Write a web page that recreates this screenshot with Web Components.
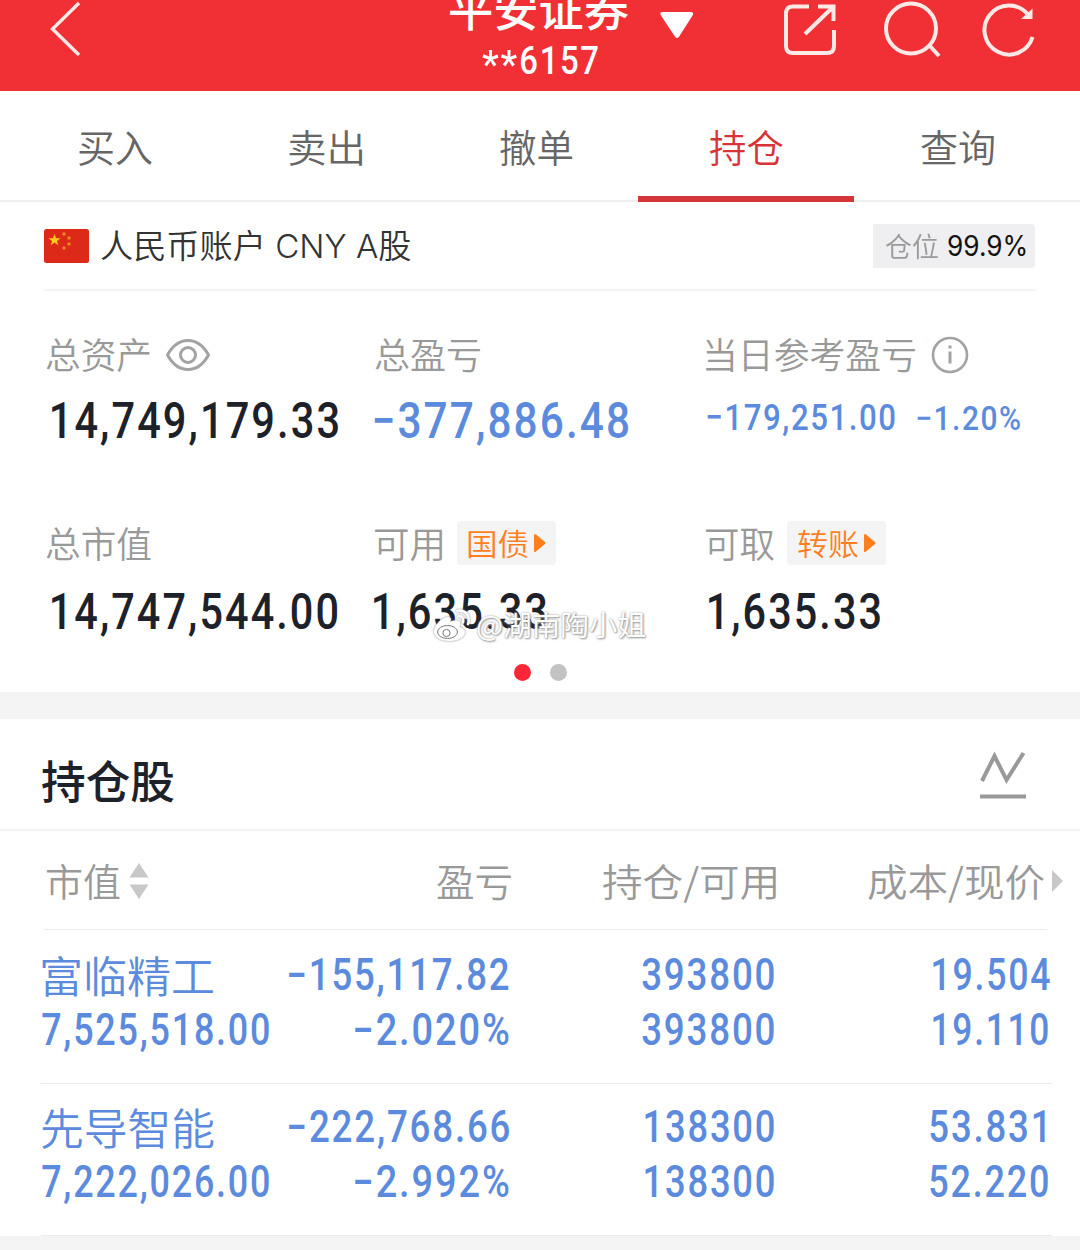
<!DOCTYPE html>
<html lang="zh-CN">
<head>
<meta charset="utf-8">
<title>持仓</title>
<style>
    body {
        margin: 0;
        background: #f4f4f4;
        font-family: "Noto Sans CJK SC", sans-serif;
    }
</style>
</head>
<body>
<trade-app></trade-app>

<script>
const ZH = `"Noto Sans CJK SC", sans-serif`;
const pen = document.createElement("canvas").getContext("2d");

// One line of text squeezed or stretched to an exact ink width.
class FitText extends HTMLElement {
    constructor() {
        super();
        this.attachShadow({ mode: "open" });
        this.shadowRoot.innerHTML = /* html */ `
            <style>
                :host {
                    display: block;
                    flex: none;
                    line-height: 50px;
                    height: 50px;
                }

                span {
                    display: block;
                    width: max-content;
                    white-space: pre;
                    transform-origin: 0 50%;
                }
            </style>
            <span><slot></slot></span>
        `;
    }

    connectedCallback() {
        const width = Number(this.getAttribute("w"));
        const css = getComputedStyle(this);
        pen.font = `${css.fontWeight} ${css.fontSize} ${css.fontFamily}`;
        pen.letterSpacing = css.letterSpacing === "normal" ? "0px" : css.letterSpacing;
        const m = pen.measureText(this.textContent);
        const scale = width / (m.actualBoundingBoxLeft + m.actualBoundingBoxRight);
        this.style.width = width + "px";
        this.shadowRoot.querySelector("span").style.transform =
            `translateX(${m.actualBoundingBoxLeft * scale}px) scaleX(${scale})`;
    }
}

class AppHeader extends HTMLElement {
    constructor() {
        super();
        this.attachShadow({ mode: "open" });
        this.shadowRoot.innerHTML = /* html */ `
            <style>
                :host {
                    display: grid;
                    grid-template-columns: 450px 180px 1fr;
                    height: 91px;
                    overflow: hidden;
                    background: #f03035;
                    color: #fff;
                }

                svg { display: block; }
                .back { margin: 0 0 0 48px; }
                .title { font: 500 45px ${ZH}; line-height: 50px; margin-top: -17px; }
                .code {
                    display: flex;
                    gap: 4px;
                    margin: 3px 0 0 32px;
                    font: 500 39px Roboto, sans-serif;
                    letter-spacing: 0.05em;
                }
                .code fit-text { line-height: 50px; }
                .stars { margin-top: 4px; }
            </style>
            <svg class="back" width="36" height="60" fill="none" stroke="#ffe9e6" stroke-width="3.4">
                <path d="M31 3 4.500 29 31 55"/>
            </svg>
            <div>
                <fit-text class="title" w="179">平安证券</fit-text>
                <div class="code">
                    <fit-text class="stars" w="35">**</fit-text>
                    <fit-text w="77">6157</fit-text>
                </div>
            </div>
            <svg width="450" height="91" fill="none" stroke="#ffe9e6" stroke-width="4">
                <path fill="#fff" stroke="none" d="M32.500 12h28q4 0 2 3.500L49.500 36q-2.500 4-5 0L31 15.500Q29 12 32.500 12z"/>
                <path d="M179 6.500H163q-7 0-7 7V46q0 7 7 7h34q7 0 7-7V30"/>
                <path d="M188 6.500h15.500V21M203 7 175 34"/>
                <circle cx="281" cy="28.500" r="25"/>
                <path d="m299 45 10 11"/>
                <path d="M402.500 37A24.500 24.500 0 1 1 397.500 14"/>
                <path fill="#ffe9e6" stroke="none" d="M402.500 8.500V19H391z"/>
            </svg>
        `;
    }
}

class TabItem extends HTMLElement {
    constructor() {
        super();
        this.attachShadow({ mode: "open" });
        this.shadowRoot.innerHTML = /* html */ `
            <style>
                :host {
                    display: flex;
                    flex-direction: column;
                    align-items: center;
                    justify-content: space-between;
                    color: #666;
                    font: 350 38px ${ZH};
                }

                :host([active]) { color: #d83437; }
                fit-text { margin-top: 30px; }
                i { width: 216px; height: 6px; margin-left: -2px; }
                :host([active]) i { background: #d53639; }
            </style>
            <fit-text w="73">${this.textContent}</fit-text>
            <i></i>
        `;
    }
}

class TabBar extends HTMLElement {
    constructor() {
        super();
        this.attachShadow({ mode: "open" });
        this.shadowRoot.innerHTML = /* html */ `
            <style>
                :host {
                    display: grid;
                    grid-template-columns: repeat(5, 210.5px);
                    height: 111px;
                    padding-left: 10px;
                    background: linear-gradient(#eee, #eee) 0 109px / 100% 2px no-repeat #fff;
                }
            </style>
            <slot></slot>
        `;
    }
}

class AccountBar extends HTMLElement {
    constructor() {
        super();
        this.attachShadow({ mode: "open" });
        this.shadowRoot.innerHTML = /* html */ `
            <style>
                :host {
                    display: flex;
                    align-items: center;
                    height: 87px;
                    margin: 0 44px;
                    border-bottom: 2px solid #f5f5f5;
                }

                .name {
                    margin: 2px auto 0 12px;
                    color: #333;
                    font: 350 32.500px Inter, ${ZH};
                    line-height: 50px;
                }

                .badge {
                    display: flex;
                    align-items: center;
                    gap: 10px;
                    box-sizing: border-box;
                    width: 162px;
                    height: 44px;
                    padding-left: 12px;
                    border-radius: 0 4px 4px 0;
                    background: #efeff1;
                    color: #999;
                    font: 350 27px ${ZH};
                    margin-right: 1px;
                }

                .pct { color: #111; font: 400 28px Inter, sans-serif; line-height: 50px; }
            </style>
            <svg width="45" height="34" viewBox="0 0 45 34">
                <rect width="45" height="34" rx="2.500" fill="#dd2a18"/>
                <path fill="#ffcc1a" d="m10.500 5 1.500 4.200h4.500l-3.600 2.700 1.400 4.300-3.800-2.600-3.700 2.600 1.300-4.300-3.600-2.700H9z"/>
                <g fill="#f08a1c">
                    <circle cx="20" cy="5" r="1.700"/><circle cx="25" cy="9" r="1.700"/>
                    <circle cx="25" cy="15" r="1.700"/><circle cx="20" cy="19" r="1.700"/>
                </g>
            </svg>
            <fit-text class="name" w="310">人民币账户 CNY A股</fit-text>
            <div class="badge">
                <fit-text w="53">仓位</fit-text>
                <fit-text class="pct" w="78">99.9%</fit-text>
            </div>
        `;
    }
}

// Small orange link button next to a label.
class LinkChip extends HTMLElement {
    constructor() {
        super();
        this.attachShadow({ mode: "open" });
        this.shadowRoot.innerHTML = /* html */ `
            <style>
                :host {
                    display: flex;
                    align-items: center;
                    gap: 6px;
                    box-sizing: border-box;
                    width: 99px;
                    height: 44px;
                    padding-left: 11px;
                    margin-top: -2px;
                    border-radius: 4px;
                    background: #f4f4f4;
                    color: #ff7f1e;
                    font: 350 30px ${ZH};
                }
                fit-text { margin-top: -2px; }
            </style>
            <fit-text w="60">${this.textContent}</fit-text>
            <svg width="12" height="20"><path fill="#ff7f1e" d="M0 2.500Q0 0 2 1.500L11 9q1 1 0 2L2 18.500Q0 20 0 17.500z"/></svg>
        `;
    }
}

class AssetStat extends HTMLElement {
    constructor() {
        super();
        this.attachShadow({ mode: "open" });
        this.shadowRoot.innerHTML = /* html */ `
            <style>
                :host { display: block; color: #1d2129; }
                .label {
                    display: flex;
                    align-items: center;
                    height: 50px;
                    color: #999;
                    font: 350 36px ${ZH};
                }
                .label fit-text { margin-top: -4px; }
                .value {
                    display: flex;
                    height: 50px;
                    margin-top: 16px;
                    font: 500 50px Roboto, sans-serif;
                    letter-spacing: 0.05em;
                }
                :host([low]) .value { margin-top: 18px; }
            </style>
            <div class="label">
                <fit-text w="${this.getAttribute("label-w")}">${this.getAttribute("label")}</fit-text>
                <slot name="extra"></slot>
            </div>
            <div class="value"><slot></slot></div>
        `;
    }
}

class AssetPanel extends HTMLElement {
    constructor() {
        super();
        this.attachShadow({ mode: "open" });
        this.shadowRoot.innerHTML = /* html */ `
            <style>
                :host { display: block; position: relative; height: 490px; background: #fff; }
                .stats {
                    display: grid;
                    grid-template-columns: 329px 331px 1fr;
                    row-gap: 73px;
                    padding: 39px 0 0 46px;
                }
                .blue { color: #5c8bdd; }
                .mid { font-size: 37.500px; margin-top: -4px; letter-spacing: 0.05em; }
                .pct { font-size: 34px; margin: -3px 0 0 22px; letter-spacing: 0.05em; }
                link-chip { margin-left: 13px; }
                .dots { display: flex; gap: 19px; padding: 27px 0 0 514px; }
                .dots i { width: 17px; height: 17px; border-radius: 50%; background: #c3c3c3; }
                .dots .on { background: #fb2739; }
                .mark {
                    position: absolute;
                    left: 432px;
                    top: 399px;
                    display: flex;
                    gap: 6px;
                    color: #fff;
                    font: 400 28px ${ZH};
                    text-shadow: 0 0 2px #999, 1px 1px 2px #999;
                }
                .mark svg { filter: drop-shadow(0 0 1px #888); margin-top: 6px; }
                .mark fit-text { margin-top: -2px; }
            </style>
            <account-bar></account-bar>
            <div class="stats">
                <asset-stat label="总资产" label-w="104">
                    <svg slot="extra" width="46" height="34" fill="none" stroke="#a3a3a3" stroke-width="3" style="margin-left:15px">
                        <path d="M2.500 17C8 7 15 2.500 23 2.500S38 7 43.500 17C38 27 31 31.500 23 31.500S8 27 2.500 17z"/>
                        <circle cx="23" cy="17" r="7.500"/>
                    </svg>
                    <fit-text w="286" style="margin-left:6px">14,749,179.33</fit-text>
                </asset-stat>
                <asset-stat label="总盈亏" label-w="105">
                    <fit-text class="blue" w="254" style="margin-left:-1px">−377,886.48</fit-text>
                </asset-stat>
                <asset-stat label="当日参考盈亏" label-w="209">
                    <svg slot="extra" width="38" height="38" fill="none" stroke="#a3a3a3" stroke-width="2.600" style="margin-left:16px">
                        <circle cx="19" cy="19" r="17"/>
                        <path stroke-width="3" d="M19 9.500v3M19 15.500v12"/>
                    </svg>
                    <fit-text class="blue mid" w="188" style="margin-left:1px">−179,251.00</fit-text>
                    <fit-text class="blue pct" w="103">−1.20%</fit-text>
                </asset-stat>
                <asset-stat low label="总市值" label-w="105">
                    <fit-text w="285" style="margin-left:6px">14,747,544.00</fit-text>
                </asset-stat>
                <asset-stat low label="可用" label-w="67">
                    <link-chip slot="extra" style="margin-left:15px">国债</link-chip>
                    <fit-text w="172" style="margin-left:-1px">1,635.33</fit-text>
                </asset-stat>
                <asset-stat low label="可取" label-w="68">
                    <link-chip slot="extra">转账</link-chip>
                    <fit-text w="171" style="margin-left:3px">1,635.33</fit-text>
                </asset-stat>
            </div>
            <div class="dots"><i class="on"></i><i></i></div>
            <div class="mark">
                <svg width="39" height="36" viewBox="0 0 39 36">
                    <path fill="#fff" d="M2 24c0-7 10-15 15-14 3 1 2 4 1 5 4-2 9-2 10 1 1 2-1 4 0 4 10 4 4 14-11 14C8 34 2 30 2 24z"/>
                    <ellipse cx="15.500" cy="25" rx="10" ry="6.500" fill="none" stroke="#777" stroke-width="1"/>
                    <circle cx="14.500" cy="26" r="3.600" fill="none" stroke="#777" stroke-width="1"/>
                    <path fill="none" stroke="#fff" stroke-width="2.500" stroke-linecap="round" d="M25 4c8-2 14 5 11 13M26 9.500c4-1 6 2 5 6"/>
                </svg>
                <fit-text w="168">@湖南陶小姐</fit-text>
            </div>
        `;
    }
}

class HoldingRow extends HTMLElement {
    constructor() {
        super();
        this.attachShadow({ mode: "open" });
        this.shadowRoot.innerHTML = /* html */ `
            <style>
                :host {
                    display: grid;
                    grid-template-columns: 232px 236px 265px 276px;
                    grid-template-rows: 55px 55px;
                    align-content: start;
                    box-sizing: border-box;
                    height: 152px;
                    margin: 0 28px 0 41px;
                    padding-top: 19px;
                    border-bottom: 1px solid #ebebeb;
                    color: #5c8bdd;
                    font: 500 43.500px Roboto, sans-serif;
                    letter-spacing: 0.05em;
                }
                :host([first]) { height: 154px; padding-top: 21px; }
                ::slotted(*) { justify-self: end; }
                ::slotted(.l) { justify-self: start; margin-left: 1px; }
                ::slotted(.name) { font: 350 43px ${ZH}; line-height: 50px; letter-spacing: 0; margin-top: -2px; }
            </style>
            <slot></slot>
        `;
    }
}

class HoldingList extends HTMLElement {
    constructor() {
        super();
        this.attachShadow({ mode: "open" });
        this.shadowRoot.innerHTML = /* html */ `
            <style>
                :host { display: block; margin-top: 27px; background: #fff; }
                .top {
                    display: flex;
                    justify-content: space-between;
                    height: 110px;
                    padding: 0 54px 0 42px;
                    border-bottom: 2px solid #f3f3f3;
                    color: #1d2129;
                    font: 500 45px ${ZH};
                }
                .top fit-text { margin-top: 36px; }
                .top svg { margin-top: 31px; }
                .cols {
                    display: grid;
                    grid-template-columns: 105px 362px 265px 268px 19px;
                    align-items: center;
                    justify-items: end;
                    height: 99px;
                    margin-left: 44px;
                    color: #999;
                    font: 350 38px ${ZH};
                    background: linear-gradient(#ebebeb, #ebebeb) 0 100% / 1003px 1px no-repeat;
                }
                .cols div { display: flex; align-items: center; gap: 9px; }
                .cols fit-text { margin-top: -1px; }
            </style>
            <div class="top">
                <fit-text w="132">持仓股</fit-text>
                <svg width="46" height="50" fill="none" stroke="#999" stroke-width="4">
                    <path d="M2 31 14.500 6 26.500 30 43.500 3M0 46.500h46"/>
                </svg>
            </div>
            <div class="cols">
                <div>
                    <fit-text w="74">市值</fit-text>
                    <svg width="20" height="36" fill="#c8c8c8"><path d="M10 0l9.500 14.500H.5zM10 36l9.500-14.500H.5z"/></svg>
                </div>
                <fit-text w="74">盈亏</fit-text>
                <fit-text w="173">持仓/可用</fit-text>
                <fit-text w="176">成本/现价</fit-text>
                <svg width="11" height="22" fill="#c8c8c8"><path d="M0 0l11 11L0 22z"/></svg>
            </div>
            <holding-row first>
                <fit-text class="l name" w="171">富临精工</fit-text>
                <fit-text w="220">−155,117.82</fit-text>
                <fit-text w="132">393800</fit-text>
                <fit-text w="117">19.504</fit-text>
                <fit-text class="l" w="227">7,525,518.00</fit-text>
                <fit-text w="154">−2.020%</fit-text>
                <fit-text w="132">393800</fit-text>
                <fit-text w="115" style="margin-right:2px">19.110</fit-text>
            </holding-row>
            <holding-row>
                <fit-text class="l name" w="172">先导智能</fit-text>
                <fit-text w="220">−222,768.66</fit-text>
                <fit-text w="129">138300</fit-text>
                <fit-text w="115" style="margin-right:5px">53.831</fit-text>
                <fit-text class="l" w="227">7,222,026.00</fit-text>
                <fit-text w="154">−2.992%</fit-text>
                <fit-text w="129">138300</fit-text>
                <fit-text w="118" style="margin-right:2px">52.220</fit-text>
            </holding-row>
        `;
    }
}

class TradeApp extends HTMLElement {
    constructor() {
        super();
        this.attachShadow({ mode: "open" });
        this.shadowRoot.innerHTML = /* html */ `
            <style>
                :host { display: block; width: 1080px; height: 1250px; overflow: hidden; }
            </style>
            <app-header></app-header>
            <tab-bar>
                <tab-item>买入</tab-item>
                <tab-item>卖出</tab-item>
                <tab-item>撤单</tab-item>
                <tab-item active>持仓</tab-item>
                <tab-item>查询</tab-item>
            </tab-bar>
            <asset-panel></asset-panel>
            <holding-list></holding-list>
        `;
    }
}

customElements.define("fit-text", FitText);
customElements.define("app-header", AppHeader);
customElements.define("tab-item", TabItem);
customElements.define("tab-bar", TabBar);
customElements.define("account-bar", AccountBar);
customElements.define("link-chip", LinkChip);
customElements.define("asset-stat", AssetStat);
customElements.define("asset-panel", AssetPanel);
customElements.define("holding-row", HoldingRow);
customElements.define("holding-list", HoldingList);
customElements.define("trade-app", TradeApp);
</script>
</body>
</html>
